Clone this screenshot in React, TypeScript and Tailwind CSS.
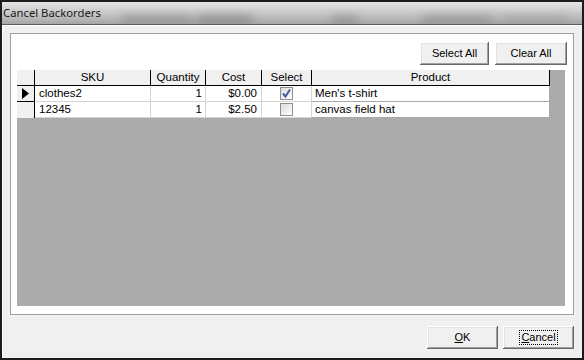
import React from "react";

const btn =
  "flex items-center justify-center bg-[#f0f0f0] text-[11px] text-black shadow-[inset_-1px_-1px_0_#696969,inset_1px_1px_0_#ffffff,inset_-2px_-2px_0_#a0a0a0,inset_2px_2px_0_#e3e3e3]";

function Check({ checked }: { checked: boolean }) {
  return (
    <div className="w-[13px] h-[13px] border border-[#8f8f8f] bg-gradient-to-br from-[#dcdcdc] to-[#ffffff] flex items-center justify-center">
      {checked && (
        <svg width="11" height="11" viewBox="0 0 11 11">
          <path d="M2 5.5 L4.5 8.5 L9 1.5" stroke="#4b5e96" strokeWidth="2" fill="none" />
        </svg>
      )}
    </div>
  );
}

const cols = "grid grid-cols-[18px_116px_55px_56px_50px_238px]";

export default function App() {
  const rows = [
    { sku: "clothes2", qty: "1", cost: "$0.00", sel: true, product: "Men's t-shirt", cur: true },
    { sku: "12345", qty: "1", cost: "$2.50", sel: false, product: "canvas field hat", cur: false },
  ];
  return (
    <div
      className="w-[584px] h-[360px] bg-[#f0f0f0] border-2 border-[#1c1c1c] flex flex-col overflow-hidden"
      style={{ fontFamily: '"Liberation Sans", Arial, sans-serif' }}
    >
      <div className="relative h-[23px] shrink-0 bg-gradient-to-b from-[#e6e6e6] via-[#c8c8c8] to-[#a6a6a6] border-b border-[#5c5c5c] flex items-center pl-[1px] overflow-hidden">
        <div className="absolute left-[120px] top-[14px] w-[70px] h-[8px] bg-[#8a8a8a] blur-[5px] opacity-70" />
        <div className="absolute left-[195px] top-[14px] w-[55px] h-[8px] bg-[#7a7a7a] blur-[5px] opacity-70" />
        <div className="absolute left-[330px] top-[14px] w-[25px] h-[8px] bg-[#7f7f7f] blur-[5px] opacity-60" />
        <div className="absolute left-[420px] top-[14px] w-[70px] h-[8px] bg-[#848484] blur-[5px] opacity-60" />
        <div className="absolute left-[500px] top-[14px] w-[65px] h-[8px] bg-[#999999] blur-[5px] opacity-60" />
        <span
          className="relative text-[11.3px] text-[#1a1a1a]"
          style={{ fontFamily: '"Noto Sans", "Open Sans", sans-serif' }}
        >
          Cancel Backorders
        </span>
      </div>
      <div className="flex-1 flex flex-col border-l border-t border-[#ffffff]">
        <div className="ml-[7px] mt-[7px] w-[564px] h-[282px] bg-white border border-[#a0a0a0] flex flex-col">
          <div className="flex justify-end gap-[6px] mt-[8px] mr-[6px]">
            <div className={`${btn} w-[69px] h-[23px]`}>Select All</div>
            <div className={`${btn} w-[72px] h-[23px]`}>Clear All</div>
          </div>
          <div className="ml-[6px] mt-[5px] w-[548px] h-[236px] bg-[#ababab] text-[11.5px] text-black">
            <div className={`${cols} h-[16px]`}>
              <div className="bg-[#f0f0f0] border-r border-b border-black" />
              {["SKU", "Quantity", "Cost", "Select", "Product"].map((h) => (
                <div
                  key={h}
                  className="bg-[#f0f0f0] border-r border-b border-black flex items-center justify-center leading-none"
                >
                  {h}
                </div>
              ))}
            </div>
            {rows.map((r, i) => (
              <div key={i} className={`${cols} h-[16px]`}>
                <div
                  className={`bg-[#f0f0f0] border-r border-black flex items-center justify-center ${
                    i === 0 ? "border-b" : ""
                  }`}
                >
                  {r.cur && (
                    <svg width="7" height="11" viewBox="0 0 7 11">
                      <path d="M0 0 L7 5.5 L0 11 Z" fill="#000" />
                    </svg>
                  )}
                </div>
                <div className="bg-white border-r border-b border-[#d4d4d4] flex items-center pl-[4px] leading-none">
                  {r.sku}
                </div>
                <div className="bg-white border-r border-b border-[#d4d4d4] flex items-center justify-end pr-[3px] leading-none">
                  {r.qty}
                </div>
                <div className="bg-white border-r border-b border-[#d4d4d4] flex items-center justify-end pr-[4px] leading-none">
                  {r.cost}
                </div>
                <div className="bg-white border-r border-b border-[#d4d4d4] flex items-center justify-center">
                  <Check checked={r.sel} />
                </div>
                <div className="bg-white border-r border-b border-[#a9a9a9] flex items-center pl-[3px] leading-none">
                  {r.product}
                </div>
              </div>
            ))}
          </div>
        </div>
        <div className="flex justify-end gap-[5px] mt-[11px] mr-[8px]">
          <div className={`${btn} w-[71px] h-[23px]`}>
            <span>
              <span className="underline">O</span>K
            </span>
          </div>
          <div className={`${btn} w-[71px] h-[23px]`}>
            <span className="border border-dotted border-black px-[1px] leading-[13px]">
              <span className="underline">C</span>ancel
            </span>
          </div>
        </div>
      </div>
    </div>
  );
}
